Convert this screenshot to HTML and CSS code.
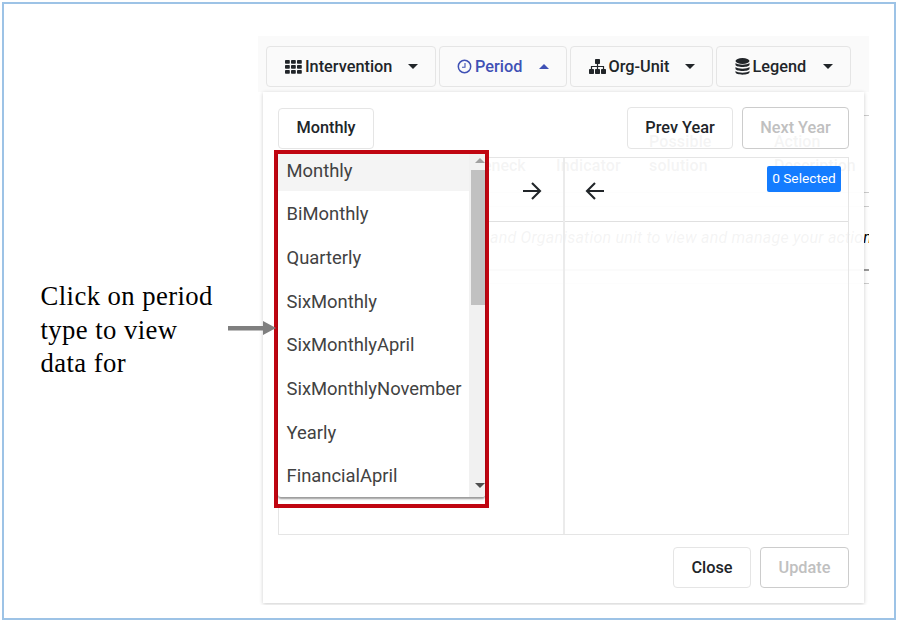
FILE: index.html
```html
<!DOCTYPE html>
<html lang="en">
<head>
<meta charset="utf-8">
<title>Period selection</title>
<link rel="stylesheet" href="styles.css">
</head>
<body>
<main class="frame">
  <aside class="note">
    <p>Click on period<br>type to view<br>data for</p>
    <svg class="pointer" width="48" height="14" viewBox="0 0 48 14"><path d="M0 5h35V0l13 7-13 7V9.500H0z" fill="#7f7f7f"/></svg>
  </aside>
  <section class="app">
    <div class="backdrop">
      <span class="ghost bottleneck">Bottleneck</span>
      <span class="ghost indicator">Indicator</span>
      <span class="ghost possible">Possible<br>solution</span>
      <span class="ghost action">Action<br>Description</span>
      <span class="ghost hint">and Organisation unit to view and manage your action</span>
      <i class="rule r1"></i><i class="rule r2"></i><i class="rule r3"></i><i class="rule r4"></i><i class="rule r5"></i>
    </div>
    <nav class="toolbar">
      <button class="btn intervention">
        <svg width="17" height="14" viewBox="0 0 17 14" fill="#212529"><rect width="4.800" height="3.800" rx=".8"/><rect x="6" width="4.800" height="3.800" rx=".8"/><rect x="12" width="4.800" height="3.800" rx=".8"/><rect y="5" width="4.800" height="3.800" rx=".8"/><rect x="6" y="5" width="4.800" height="3.800" rx=".8"/><rect x="12" y="5" width="4.800" height="3.800" rx=".8"/><rect y="10" width="4.800" height="3.800" rx=".8"/><rect x="6" y="10" width="4.800" height="3.800" rx=".8"/><rect x="12" y="10" width="4.800" height="3.800" rx=".8"/></svg>
        <span>Intervention</span><i class="caret"></i>
      </button>
      <button class="btn period">
        <svg width="15" height="15" viewBox="0 0 15 15" fill="none" stroke="#3f51b5"><circle cx="7.500" cy="7.500" r="6.200" stroke-width="1.500"/><path d="M8 4v4.300H5" stroke-width="1.100"/></svg>
        <span>Period</span><i class="caret up"></i>
      </button>
      <button class="btn orgunit">
        <svg width="17" height="15" viewBox="0 0 17 15" fill="#212529"><rect x="6" y="0" width="5" height="5" rx=".7"/><rect x="0" y="10" width="5" height="5" rx=".7"/><rect x="6" y="10" width="5" height="5" rx=".7"/><rect x="12" y="10" width="5" height="5" rx=".7"/><path d="M8.500 4v7M2.500 11V7.500h12V11" fill="none" stroke="#212529" stroke-width="1.200"/></svg>
        <span>Org-Unit</span><i class="caret"></i>
      </button>
      <button class="btn legend">
        <svg width="15" height="17" viewBox="0 0 15 17" fill="#212529"><ellipse cx="7.500" cy="3" rx="7" ry="2.900"/><path d="M.5 5c2.500 2.300 11.500 2.300 14 0v1.800c0 3-14 3-14 0zM.5 9c2.500 2.300 11.500 2.300 14 0v1.800c0 3-14 3-14 0zM.5 13c2.500 2.300 11.500 2.300 14 0v1.300c0 3.200-14 3.200-14 0z"/></svg>
        <span>Legend</span><i class="caret"></i>
      </button>
    </nav>
    <div class="panel">
      <header class="actions">
        <div class="select">
          <button class="btn monthly"><span>Monthly</span></button>
          <div class="highlight">
            <div class="menu">
              <ul>
                <li class="active"><span>Monthly</span></li>
                <li><span>BiMonthly</span></li>
                <li><span>Quarterly</span></li>
                <li><span>SixMonthly</span></li>
                <li><span>SixMonthlyApril</span></li>
                <li><span>SixMonthlyNovember</span></li>
                <li><span>Yearly</span></li>
                <li><span>FinancialApril</span></li>
              </ul>
              <div class="scrollbar"><i class="caret up"></i><div class="thumb"></div><i class="caret"></i></div>
            </div>
          </div>
        </div>
        <button class="btn prev"><span>Prev Year</span></button>
        <button class="btn next disabled"><span>Next Year</span></button>
      </header>
      <div class="lists">
        <div class="list available">
          <div class="head"><svg width="20" height="20" viewBox="0 0 20 20"><path d="M1 10h17M10 2l8 8-8 8"/></svg></div>
        </div>
        <div class="list chosen">
          <div class="head"><svg width="20" height="20" viewBox="0 0 20 20"><path d="M19 10H2M10 2l-8 8 8 8"/></svg><span class="badge">0 Selected</span></div>
        </div>
      </div>
      <footer class="foot">
        <button class="btn close"><span>Close</span></button>
        <button class="btn update disabled"><span>Update</span></button>
      </footer>
    </div>
  </section>
</main>
</body>
</html>
```
FILE: styles.css
```css
* { box-sizing: border-box; }
body { margin: 0; padding: 2px; width: 898px; height: 622px; background: #fff; font-family: Roboto, sans-serif; color: #212529; overflow: hidden; }
.frame { width: 894px; height: 618px; border: 2px solid #9dc3e6; display: flex; }
.note { width: 254px; padding: 276px 0 0 36.500px; display: flex; }
.note p { margin: 0; width: 187.500px; flex: none; font: 26.700px/33.500px "Liberation Serif", serif; letter-spacing: .42px; color: #000; }
.pointer { flex: none; margin-top: 41px; position: relative; z-index: 4; }
.app { position: relative; width: 611px; height: 569px; margin-top: 32px; overflow: hidden; background: #fff; }
.toolbar { position: relative; display: flex; gap: 3px; height: 56px; padding: 9.500px 0 0 8px; background: #fafafa; }
.btn { display: flex; align-items: center; flex: none; height: 41px; padding: 0; border: 1px solid #e5e5e5; border-radius: 4px; background: transparent; color: #212529; font: 500 16.300px/20px Roboto, sans-serif; white-space: nowrap; }
.toolbar .btn { padding: 1px 17px 0 18px; }
.toolbar .btn svg { flex: none; margin-right: 3px; }
.toolbar .period { padding-left: 17px; }
.toolbar .orgunit, .toolbar .legend { padding-left: 17.500px; }
.intervention { width: 170px; }
.period { width: 128px; color: #3f51b5; }
.orgunit { width: 143px; }
.legend { width: 135px; }
.caret { width: 0; height: 0; margin-left: auto; border: 5px solid transparent; border-top-color: currentColor; border-bottom: 0; }
.caret.up { border-top: 0; border-bottom: 5px solid currentColor; }
.panel { position: relative; width: 601px; height: 511px; margin-left: 5px; padding: 15px 15px 0; background: rgba(255,255,255,.955); box-shadow: 0 1px 4px rgba(0,0,0,.2); }
.actions { display: flex; gap: 9px; height: 50px; }
.select { position: relative; margin-right: auto; padding-top: .5px; }
.panel .btn { justify-content: center; }
.monthly { width: 96px; }
.prev { width: 106px; }
.next { width: 107px; }
.actions .prev, .actions .next { height: 42px; }
.panel .disabled { color: #c0c0c0; border-color: #ccc; }
.highlight { position: absolute; z-index: 3; left: -4px; top: 42.500px; width: 215px; height: 358.500px; border: 4.500px solid #c00511; background: #fff; }
.menu { display: flex; height: 343px; box-shadow: 0 2px 2px rgba(0,0,0,.4); overflow: hidden; border-radius: 0 0 3px 3px; }
.menu ul { list-style: none; margin: 0; padding: 0; width: 192px; color: #424242; }
.menu li { height: 43.700px; padding-left: 8.500px; font-size: 18.400px; line-height: 43px; white-space: nowrap; }
.menu .active { height: 37px; background: #f4f4f4; line-height: 33px; margin-bottom: 1.700px; }
.scrollbar { display: flex; flex-direction: column; flex: 1; background: #f1f1f1; padding: 4px 0 9px 2px; color: #505050; }
.scrollbar .caret { margin: auto 0 0 4px; }
.scrollbar .caret.up { margin: 0 0 7px 4px; color: #a0a0a0; }
.thumb { height: 135px; background: #c1c1c1; }
.lists { display: flex; height: 378px; border: 1px solid #e5e5e5; }
.list { flex: 1; }
.available { border-right: 2px solid #ebebeb; }
.head { display: flex; height: 64px; padding: 23px 7px 0 20px; border-bottom: 1px solid #e0e0e0; }
.available .head { justify-content: flex-end; padding-right: 21px; }
.head svg { fill: none; stroke: #212529; stroke-width: 2.100; }
.badge { width: 74px; height: 26px; margin: -15px 0 0 auto; border-radius: 2px; background: #147cff; color: #fff; font-size: 13.700px; line-height: 25px; text-align: center; white-space: nowrap; }
.foot { display: flex; justify-content: flex-end; gap: 9px; padding-top: 12px; }
.close { width: 78px; }
.update { width: 89px; }
.backdrop { position: absolute; inset: 0; }
.ghost { position: absolute; font: 500 16px/24px Roboto, sans-serif; color: #000; white-space: nowrap; }
.bottleneck { left: 191px; top: 118px; }
.indicator { left: 298px; top: 118px; letter-spacing: .15px; }
.possible { left: 391px; top: 94px; letter-spacing: .15px; }
.action { left: 516px; top: 94px; }
.hint { left: 232px; top: 190px; font-weight: 400; font-style: italic; letter-spacing: .22px; }
.rule { position: absolute; left: 220px; right: 0; height: 1px; background: #ccc; }
.r1 { top: 79px; left: 605px; }
.r2 { top: 156px; }
.r3 { top: 170px; }
.r4 { top: 233px; height: 2px; background: #999; }
.r5 { top: 247px; }
```
